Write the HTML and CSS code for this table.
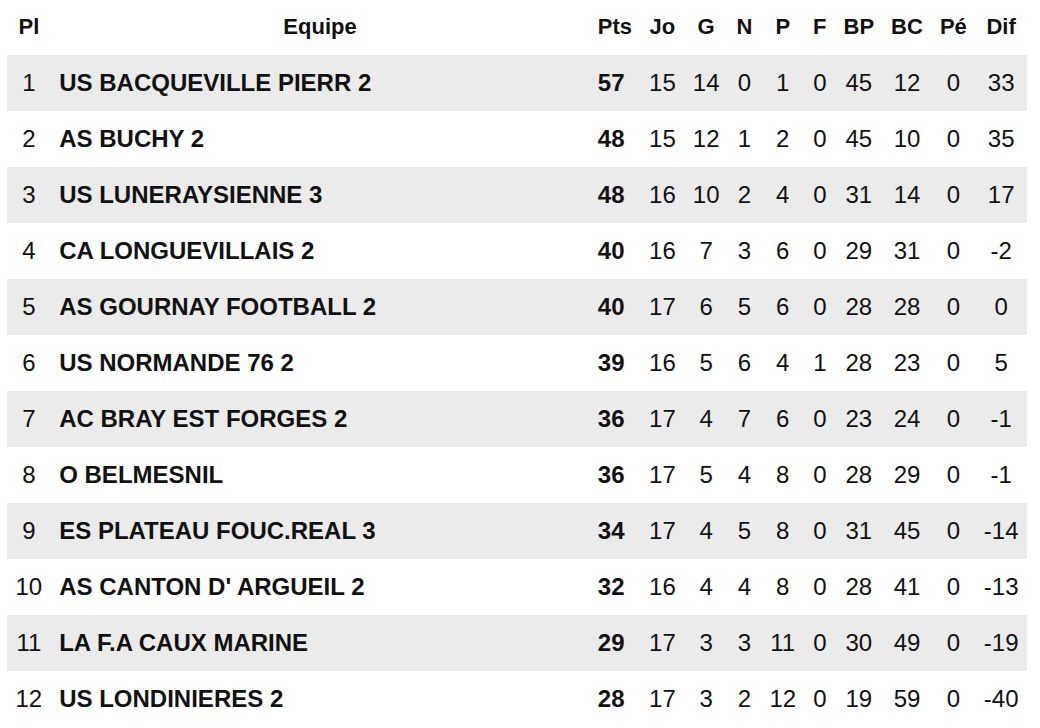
FILE: index.html
```html
<!DOCTYPE html>
<html lang="fr">
<head>
<meta charset="utf-8">
<title>Classement</title>
<link rel="stylesheet" href="styles.css">
</head>
<body>
<table class="standings">
  <thead>
    <tr>
      <th>Pl</th><th class="team-head">Equipe</th><th class="pts-head">Pts</th><th>Jo</th><th>G</th><th>N</th><th>P</th><th>F</th><th>BP</th><th>BC</th><th>Pé</th><th>Dif</th>
    </tr>
  </thead>
  <tbody>
    <tr><td>1</td><td class="team">US BACQUEVILLE PIERR 2</td><td class="pts">57</td><td>15</td><td>14</td><td>0</td><td>1</td><td>0</td><td>45</td><td>12</td><td>0</td><td>33</td></tr>
    <tr><td>2</td><td class="team">AS BUCHY 2</td><td class="pts">48</td><td>15</td><td>12</td><td>1</td><td>2</td><td>0</td><td>45</td><td>10</td><td>0</td><td>35</td></tr>
    <tr><td>3</td><td class="team">US LUNERAYSIENNE 3</td><td class="pts">48</td><td>16</td><td>10</td><td>2</td><td>4</td><td>0</td><td>31</td><td>14</td><td>0</td><td>17</td></tr>
    <tr><td>4</td><td class="team">CA LONGUEVILLAIS 2</td><td class="pts">40</td><td>16</td><td>7</td><td>3</td><td>6</td><td>0</td><td>29</td><td>31</td><td>0</td><td>-2</td></tr>
    <tr><td>5</td><td class="team">AS GOURNAY FOOTBALL 2</td><td class="pts">40</td><td>17</td><td>6</td><td>5</td><td>6</td><td>0</td><td>28</td><td>28</td><td>0</td><td>0</td></tr>
    <tr><td>6</td><td class="team">US NORMANDE 76 2</td><td class="pts">39</td><td>16</td><td>5</td><td>6</td><td>4</td><td>1</td><td>28</td><td>23</td><td>0</td><td>5</td></tr>
    <tr><td>7</td><td class="team">AC BRAY EST FORGES 2</td><td class="pts">36</td><td>17</td><td>4</td><td>7</td><td>6</td><td>0</td><td>23</td><td>24</td><td>0</td><td>-1</td></tr>
    <tr><td>8</td><td class="team">O BELMESNIL</td><td class="pts">36</td><td>17</td><td>5</td><td>4</td><td>8</td><td>0</td><td>28</td><td>29</td><td>0</td><td>-1</td></tr>
    <tr><td>9</td><td class="team">ES PLATEAU FOUC.REAL 3</td><td class="pts">34</td><td>17</td><td>4</td><td>5</td><td>8</td><td>0</td><td>31</td><td>45</td><td>0</td><td>-14</td></tr>
    <tr><td>10</td><td class="team">AS CANTON D' ARGUEIL 2</td><td class="pts">32</td><td>16</td><td>4</td><td>4</td><td>8</td><td>0</td><td>28</td><td>41</td><td>0</td><td>-13</td></tr>
    <tr><td>11</td><td class="team">LA F.A CAUX MARINE</td><td class="pts">29</td><td>17</td><td>3</td><td>3</td><td>11</td><td>0</td><td>30</td><td>49</td><td>0</td><td>-19</td></tr>
    <tr><td>12</td><td class="team">US LONDINIERES 2</td><td class="pts">28</td><td>17</td><td>3</td><td>2</td><td>12</td><td>0</td><td>19</td><td>59</td><td>0</td><td>-40</td></tr>
  </tbody>
</table>
</body>
</html>
```
FILE: styles.css
```css
html, body {
  margin: 0;
  padding: 0;
  background: #ffffff;
}

body {
  font-family: "Liberation Sans", Arial, Helvetica, sans-serif;
  color: #111111;
}

.standings {
  margin-left: 7px;
  width: 1020px;
  border-collapse: collapse;
  border-spacing: 0;
  font-size: 24px;
  line-height: 28px;
}

.standings th {
  font-size: 22px;
  line-height: 28px;
  font-weight: bold;
  text-align: center;
  padding: 13px 8.5px 14px;
  white-space: nowrap;
}

.standings td {
  text-align: center;
  padding: 14px 8.5px;
  white-space: nowrap;
}

.standings tbody tr:nth-child(odd) {
  background: #ebebeb;
}

.standings td.team {
  text-align: left;
  font-weight: bold;
  width: 100%;
}

.standings th.pts-head,
.standings td.pts {
  text-align: left;
}

.standings td.pts {
  font-weight: bold;
}
```
